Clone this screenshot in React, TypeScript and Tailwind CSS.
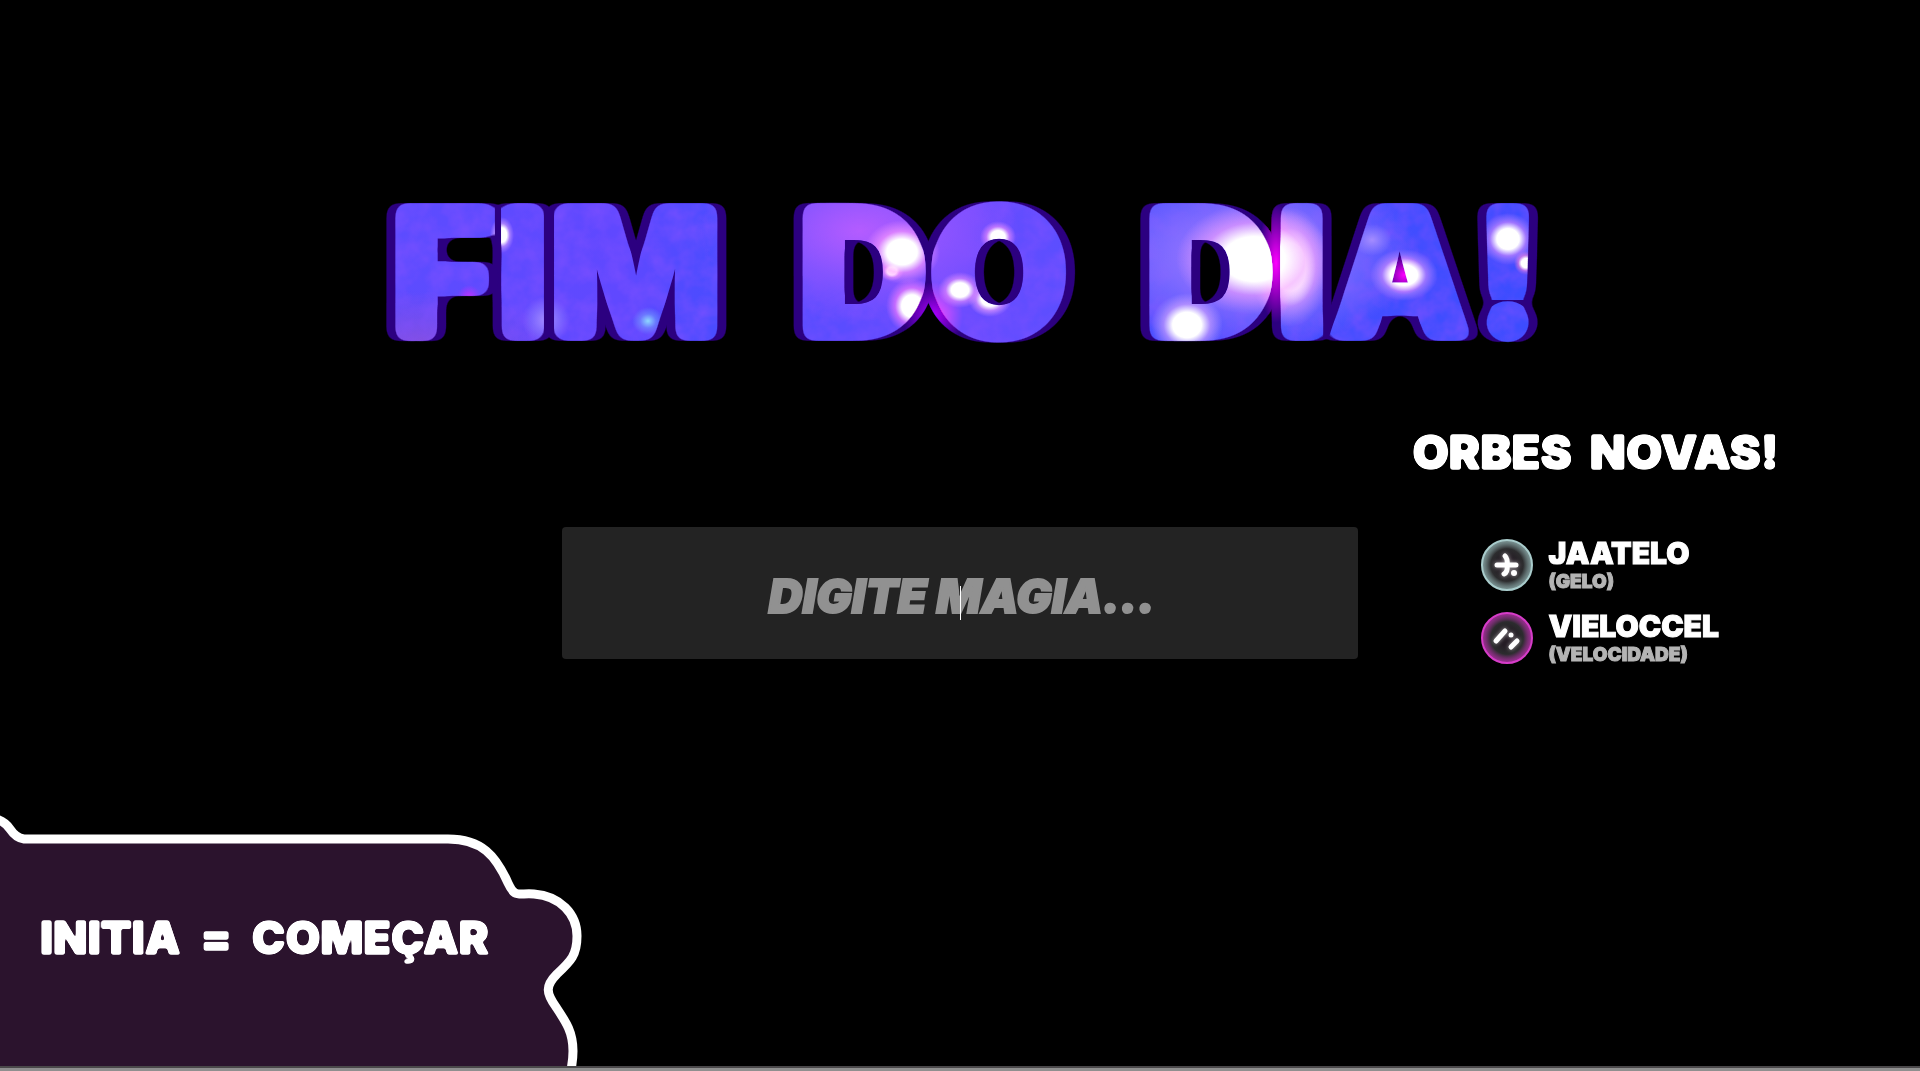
import { ReactNode } from "react";

const orbs = [
  { id: "ice", name: "JAATELO", meaning: "(GELO)" },
  { id: "speed", name: "VIELOCCEL", meaning: "(VELOCIDADE)" },
];

// bright spots of the nebula that fills the title: x, y, radius x, radius y, glow color
const stars: [number, number, number, number, string][] = [
  [112, 54, 12, 18, "#d8a0ff"],
  [512, 71, 38, 32, "#ff9cff"],
  [502, 90, 12, 10, "#e090ff"],
  [522, 125, 26, 28, "#ff80ff"],
  [608, 56, 18, 16, "#f090ff"],
  [570, 109, 22, 18, "#e890ff"],
  [600, 118, 22, 18, "#f0a0ff"],
  [797, 144, 36, 32, "#d8a8ff"],
  [864, 78, 78, 56, "#f0a0ff"],
  [900, 86, 40, 60, "#e0a0ff"],
  [1014, 94, 34, 26, "#d890ff"],
  [1118, 58, 28, 26, "#e090ff"],
  [1136, 82, 12, 12, "#ff80d0"],
];

const nebula = [
  ...stars.map(
    ([x, y, rx, ry, glow]) =>
      `radial-gradient(${rx}px ${ry}px at ${x}px ${y}px, #fff 40%, ${glow}99 65%, transparent)`
  ),
  "radial-gradient(16px 14px at 258px 140px, #90d8ff, #70a0ff88 50%, transparent)",
  "radial-gradient(24px 24px at 156px 139px, #a48cff, transparent)",
  "radial-gradient(12px 12px at 79px 116px, #c030ff, transparent)",
  "radial-gradient(20px 16px at 982px 59px, #a48cff, transparent)",
  "radial-gradient(160px 90px at 470px 50px, #b45cff, transparent)",
  "radial-gradient(170px 90px at 860px 75px, #b484ff, transparent)",
  "radial-gradient(140px 60px at 30px 170px, #8a50e0, transparent)",
  "linear-gradient(90deg, #5c4cff, #6048ff 20%, #4a4cff 28%, #6a4cff 50%, #4a50ff 68%, #3c4cff)",
].join(", ");

const Filters = () => (
  <svg className="absolute size-0" aria-hidden="true">
    <filter id="chunky" colorInterpolationFilters="sRGB">
      <feGaussianBlur stdDeviation="1" />
      <feComponentTransfer>
        <feFuncA type="linear" slope="4" intercept="-1.3" />
      </feComponentTransfer>
    </filter>
    <filter id="title" x="-5%" y="-5%" width="110%" height="110%" colorInterpolationFilters="sRGB">
      <feGaussianBlur in="SourceAlpha" stdDeviation="7" />
      <feComponentTransfer result="shape">
        <feFuncA type="linear" slope="14" intercept="-7" />
      </feComponentTransfer>
      <feFlood floodColor="#2c0080" />
      <feComposite in2="shape" operator="in" result="dark" />
      <feOffset in="dark" dx="-9" result="left" />
      <feOffset in="dark" dx="9" result="right" />
      <feComposite in="SourceGraphic" in2="shape" operator="in" result="face" />
      <feTurbulence type="fractalNoise" baseFrequency="0.05" numOctaves="3" />
      <feColorMatrix values="0 0 0 0 0.52  0 0 0 0 0.32  0 0 0 0 1  1 0 0 0 -0.3" />
      <feComposite in2="face" operator="in" result="dust" />
      <feBlend in="dust" in2="face" mode="lighten" result="dusty" />
      <feMerge>
        <feMergeNode in="left" />
        <feMergeNode in="right" />
        <feMergeNode in="dusty" />
      </feMerge>
    </filter>
  </svg>
);

const Orb = ({ id, color, children }: { id: string; color: string; children: ReactNode }) => (
  <svg viewBox="0 0 54 54" className="size-[54px] shrink-0" aria-hidden="true">
    <defs>
      <radialGradient id={`${id}-fill`}>
        <stop offset="0.3" stopColor="#241c24" />
        <stop offset="0.65" stopColor="#2c2c2e" />
        <stop offset="1" stopColor={color} stopOpacity="0.75" />
      </radialGradient>
      <filter id={`${id}-glow`} x="-50%" y="-50%" width="200%" height="200%">
        <feGaussianBlur stdDeviation="2" />
      </filter>
    </defs>
    <circle cx="27" cy="27" r="25" fill={`url(#${id}-fill)`} stroke={color} strokeWidth="2" />
    <g stroke="#fff" strokeWidth="5" strokeLinecap="round" fill="none">
      <g filter={`url(#${id}-glow)`} opacity="0.6">{children}</g>
      {children}
    </g>
  </svg>
);

const IceOrb = () => (
  <Orb id="ice" color="#a9cccc">
    <path d="M17 27H36M25 18Q28 21 27 27Q28 34 24 36" />
    <path d="M34 35V35.1" strokeWidth="6" />
  </Orb>
);

const SpeedOrb = () => (
  <Orb id="speed" color="#d63cc8">
    <path d="M16 30L25 20M31 36L37 30" />
    <path d="M31 24V24.1" />
  </Orb>
);

const App = () => {
  return (
    <main className="relative min-h-screen bg-black text-white overflow-hidden flex flex-col justify-between font-['Inter',sans-serif] font-black">
      <Filters />

      <div>
        <div className="pt-[181px] pl-3 flex justify-center">
          <h1 className="relative whitespace-nowrap text-[182px] leading-none">
            <span className="block [filter:url(#title)]">
              <span
                className="flex gap-[74px] bg-clip-text text-transparent [-webkit-text-stroke:7px_transparent]"
                style={{ backgroundImage: nebula }}
              >
                <span>FIM</span> <span>DO</span> <span>DIA!</span>
              </span>
            </span>
            <span className="absolute inset-0 mix-blend-color-dodge bg-[radial-gradient(30px_34px_at_543px_135px,#c000a0,transparent),radial-gradient(18px_60px_at_886px_82px,#f000f0,transparent),radial-gradient(20px_20px_at_1014px_94px,#f000c0,transparent)]" />
          </h1>
        </div>

        <div className="mt-[61px] grid grid-cols-[1fr_41.5vw_1fr]">
          <div className="col-start-2 mt-[103px] relative h-[132px]">
            <input
              type="text"
              aria-label="Digite magia"
              placeholder="DIGITE MAGIA..."
              className="size-full pt-1 pl-1 rounded-sm bg-[#232323] text-center text-[47px] italic outline-none placeholder:text-[#919191] placeholder:opacity-100 placeholder:[-webkit-text-stroke:2px_#919191]"
            />
            <span className="absolute left-1/2 top-[59px] h-[34px] w-px bg-white" />
          </div>

          <section className="pl-[54px]">
            <h2 className="flex gap-[18px] text-[47px] leading-[56px] whitespace-nowrap [-webkit-text-stroke:1px_white] [filter:url(#chunky)]">
              <span>ORBES</span> <span>NOVAS!</span>
            </h2>
            <ul className="mt-[56px] ml-[68px] flex flex-col gap-[15px]">
              {orbs.map((orb) => (
                <li key={orb.id} className="flex items-center gap-[14px]">
                  {orb.id === "ice" ? <IceOrb /> : <SpeedOrb />}
                  <div>
                    <p className="text-[30px] leading-[34px] [-webkit-text-stroke:1px_white]">{orb.name}</p>
                    <p className="text-[19px] leading-[24px] text-[#b4b4b4] [-webkit-text-stroke:1px_#b4b4b4]">
                      {orb.meaning}
                    </p>
                  </div>
                </li>
              ))}
            </ul>
          </section>
        </div>
      </div>

      <footer>
        <div className="relative w-[590px] h-[256px] flex items-center pl-[40px]">
          <svg viewBox="0 0 590 256" className="absolute inset-0 size-full" aria-hidden="true">
            <path
              d="M-8 8Q4 10 10 19T24 29H448C482 29 496 46 508 73C515 88 517 83 534 84C560 86 577 104 577 126C577 145 571 151 557 164C545 176 546 183 556 197C566 212 573 222 573 241Q573 252 570 264H-8Z"
              fill="#2b132d"
              stroke="#fff"
              strokeWidth="9"
            />
          </svg>
          <p className="relative flex gap-[20px] whitespace-nowrap text-[45px] leading-[50px] [-webkit-text-stroke:1px_white] [filter:url(#chunky)]">
            <span>INITIA</span> <span>=</span> <span>COMEÇAR</span>
          </p>
        </div>
        <div className="h-[5px] bg-[#8f8f8f] border-t-2 border-[#4a484a]" />
      </footer>
    </main>
  );
};

export default App;
